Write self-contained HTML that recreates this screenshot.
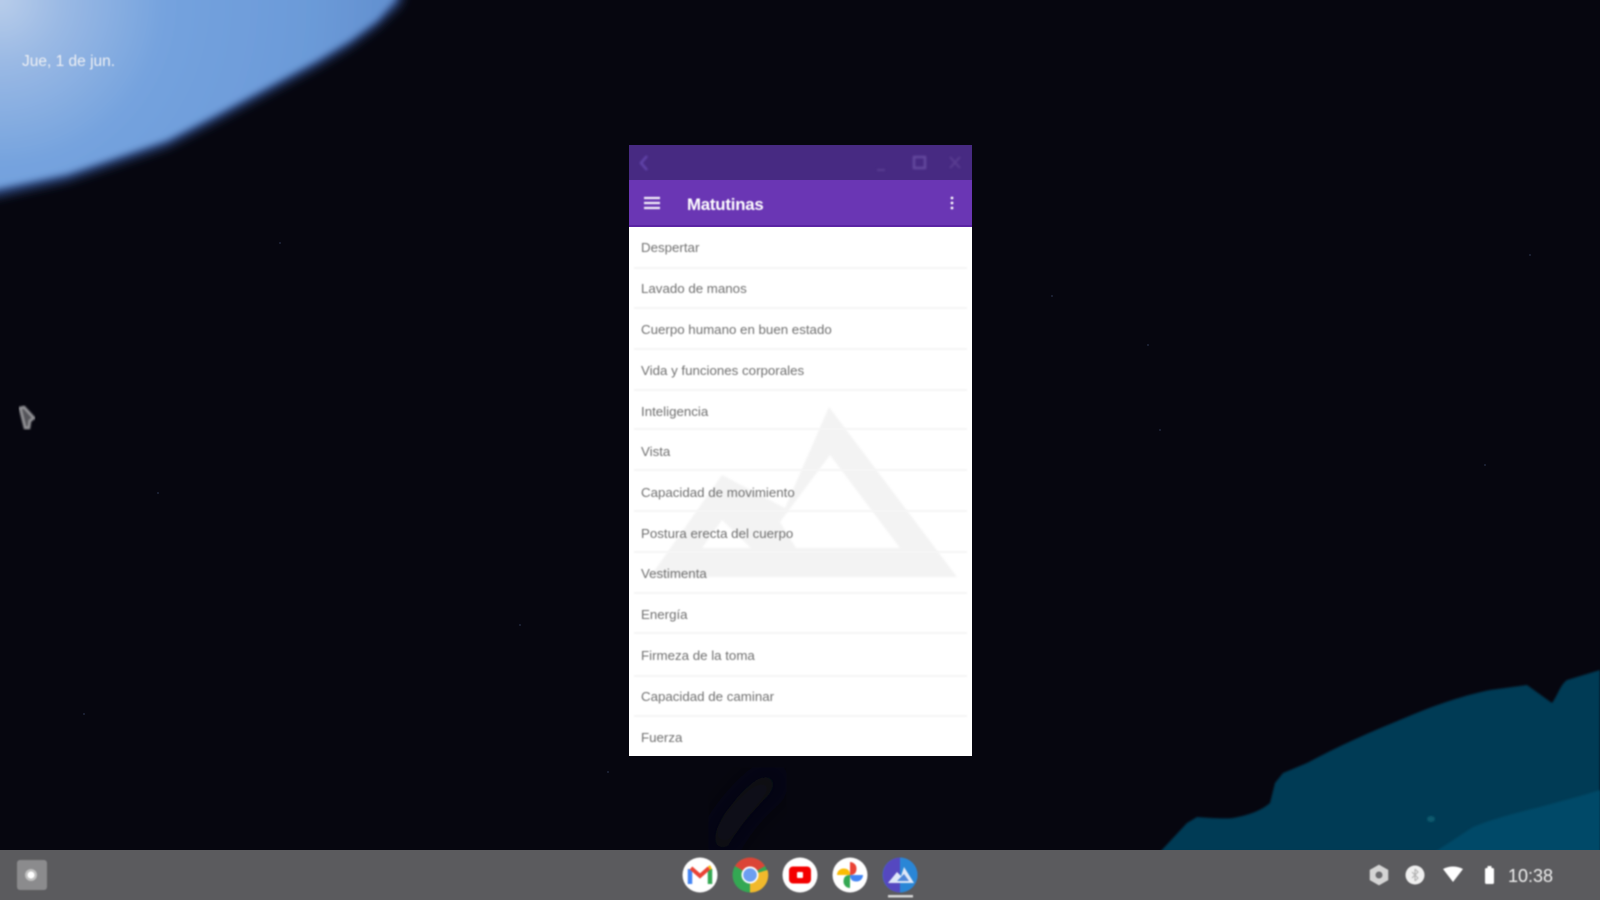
<!DOCTYPE html>
<html lang="es">
<head>
<meta charset="utf-8">
<title>Matutinas</title>
<style>
html,body{margin:0;padding:0;width:1600px;height:900px;overflow:hidden;background:#06060f;font-family:"Liberation Sans",sans-serif}
.abs{position:absolute}
#bg{position:absolute;left:0;top:0;width:1600px;height:900px}
#date{position:absolute;left:22px;top:53px;font-size:15.500px;line-height:18px;color:#eef0f4;filter:blur(.8px);white-space:nowrap}
#win{position:absolute;left:629px;top:145px;width:343px;height:611px;background:#fff;overflow:hidden}
#title{position:absolute;left:0;top:0;width:343px;height:35px;background:#472a82}
#head{position:absolute;left:0;top:35px;width:343px;height:46px;background:#6a36b4}
#head b{position:absolute;left:58px;top:15px;font-size:16.800px;line-height:20px;color:#fff;font-weight:bold;letter-spacing:-.2px;filter:blur(.8px)}
.row{position:absolute;left:12px;font-size:13.300px;line-height:16px;color:#707070;white-space:nowrap;filter:blur(.9px)}
.sep{position:absolute;left:5px;width:333px;height:2px;background:#f6f6f6;filter:blur(.8px)}
#mark{position:absolute;left:0;top:0;width:343px;height:611px;filter:blur(1px)}
#shelf{position:absolute;left:0;top:850px;width:1600px;height:50px;background:#5b5b5e}
#time{position:absolute;left:1508px;top:867px;font-size:18px;line-height:18px;color:#f0f0f0;filter:blur(.8px)}
</style>
</head>
<body>
<svg id="bg" viewBox="0 0 1600 900" xmlns="http://www.w3.org/2000/svg">
<defs>
<radialGradient id="blue" gradientUnits="userSpaceOnUse" cx="0" cy="0" r="420">
<stop offset="0" stop-color="#b8cdea"/>
<stop offset=".15" stop-color="#9ab9e4"/>
<stop offset=".4" stop-color="#74a2de"/>
<stop offset=".75" stop-color="#6b9ad8"/>
<stop offset="1" stop-color="#5f8ccc"/>
</radialGradient>
<filter id="b4"><feGaussianBlur stdDeviation="3.500"/></filter>
<filter id="b6"><feGaussianBlur stdDeviation="5"/></filter>
<filter id="b12"><feGaussianBlur stdDeviation="14"/></filter>
<filter id="b1"><feGaussianBlur stdDeviation="1"/></filter>
</defs>
<rect width="1600" height="900" fill="#06060f"/>
<path d="M-10 198 L0 196 L67 181 L117 164 L167 147 L217 121 L267 94 L317 67 L350 47 L377 27 L400 5 L405 -10 L-10 -10 Z" fill="#2f4a80" filter="url(#b6)"/>
<path d="M-10 190 L0 188 L67 174 L117 157 L167 140 L217 114 L267 87 L317 60 L350 40 L377 20 L395 0 L397 -10 L-10 -10 Z" fill="url(#blue)" filter="url(#b4)"/>
<path d="M1160 852 L1187 823 L1197 817 C1210 818 1225 819 1233 818 C1250 815 1262 810 1270 803 L1275 783 L1283 773 L1307 763 C1340 745 1375 730 1407 717 C1435 705 1465 695 1490 690 L1527 685 L1545 698 L1552 703 C1558 695 1560 685 1567 680 L1600 670 L1600 852 Z" fill="#053a55" filter="url(#b1)"/>
<path d="M1435 852 L1473 827 C1495 818 1520 812 1540 807 C1565 800 1585 795 1600 790 L1600 852 Z" fill="#064a68" filter="url(#b1)"/>
<ellipse cx="1431" cy="819" rx="4" ry="3" fill="#0b5a6e" filter="url(#b1)"/>
<path d="M715 850 C730 820 750 795 780 775" stroke="#080a1e" stroke-width="22" fill="none" filter="url(#b12)"/>
<g fill="#20283c">
<circle cx="158" cy="493" r="1"/><circle cx="84" cy="714" r="1"/><circle cx="608" cy="772" r="1"/><circle cx="1052" cy="296" r="1"/><circle cx="1160" cy="430" r="1"/><circle cx="1530" cy="255" r="1"/><circle cx="1485" cy="465" r="1"/><circle cx="280" cy="243" r="1"/><circle cx="520" cy="625" r="1"/><circle cx="1148" cy="345" r="1"/>
</g>
<path d="M20 408 L24 407 L34 418 L30 421 L29 428 L25 428 Z" fill="#55555a" stroke="#9a9a9e" stroke-width="2.500" filter="url(#b1)"/>
</svg>

<div id="date">Jue, 1 de jun.</div>

<div id="win">
<svg id="mark" viewBox="0 0 343 611" xmlns="http://www.w3.org/2000/svg">
<path fill-rule="evenodd" fill="#f3f3f3" d="M200 262 L328 432 L21 432 L93 330 L156 363 Z M201 310 L151 377 L167 403 L271 403 Z M93 375 L73 403 L122 403 Z"/>
</svg>
<div id="title">
<svg width="343" height="35" viewBox="0 0 343 35" xmlns="http://www.w3.org/2000/svg" style="filter:blur(1px)">
<path d="M18 11 L12 18 L18 25" fill="none" stroke="#6346ac" stroke-width="2.400"/>
<path d="M248 25 H256" stroke="#5a3e92" stroke-width="2"/>
<rect x="285" y="12" width="11" height="11" fill="none" stroke="#654a9f" stroke-width="2.400"/>
<path d="M321 12 L331 23 M331 12 L321 23" stroke="#5a3e92" stroke-width="2"/>
</svg>
</div>
<div id="head">
<svg class="abs" style="left:0;top:0;filter:blur(.7px)" width="343" height="46" viewBox="0 0 343 46" xmlns="http://www.w3.org/2000/svg">
<path d="M15 18 H31 M15 23 H31 M15 28 H31" stroke="#f4f0fa" stroke-width="2.200"/>
<circle cx="323" cy="18" r="1.400" fill="#fff"/><circle cx="323" cy="23" r="1.400" fill="#fff"/><circle cx="323" cy="28" r="1.400" fill="#fff"/>
</svg>
<b>Matutinas</b>
</div>
<div class="abs" style="left:0;top:80px;width:343px;height:2px;background:#5a24a4"></div>

<div class="row" style="top:95px">Despertar</div><div class="sep" style="top:122px"></div>
<div class="row" style="top:136px">Lavado de manos</div><div class="sep" style="top:162px"></div>
<div class="row" style="top:177px">Cuerpo humano en buen estado</div><div class="sep" style="top:203px"></div>
<div class="row" style="top:218px">Vida y funciones corporales</div><div class="sep" style="top:244px"></div>
<div class="row" style="top:259px">Inteligencia</div><div class="sep" style="top:283px"></div>
<div class="row" style="top:299px">Vista</div><div class="sep" style="top:324px"></div>
<div class="row" style="top:340px">Capacidad de movimiento</div><div class="sep" style="top:365px"></div>
<div class="row" style="top:381px">Postura erecta del cuerpo</div><div class="sep" style="top:406px"></div>
<div class="row" style="top:421px">Vestimenta</div><div class="sep" style="top:447px"></div>
<div class="row" style="top:462px">Energía</div><div class="sep" style="top:487px"></div>
<div class="row" style="top:503px">Firmeza de la toma</div><div class="sep" style="top:530px"></div>
<div class="row" style="top:544px">Capacidad de caminar</div><div class="sep" style="top:570px"></div>
<div class="row" style="top:585px">Fuerza</div>
</div>

<div id="shelf"></div>
<svg class="abs" style="left:0;top:850px;filter:blur(.8px)" width="1600" height="50" viewBox="0 850 1600 50" xmlns="http://www.w3.org/2000/svg">
<rect x="17" y="860" width="30" height="30" rx="3" fill="#8b8b8d"/>
<circle cx="31" cy="875" r="6" fill="#c0c0c0"/><circle cx="31" cy="875" r="3.500" fill="#fff"/>

<circle cx="700" cy="875" r="17.500" fill="#fff"/>
<path d="M690 884 V869" stroke="#4285f4" stroke-width="4.500" fill="none"/>
<path d="M710 884 V869" stroke="#34a853" stroke-width="4.500" fill="none"/>
<path d="M691 868 L700 876 L709 868" stroke="#ea4335" stroke-width="4" fill="none"/>
<path d="M709 868 L711 867" stroke="#fbbc05" stroke-width="4" fill="none"/>

<circle cx="750" cy="875" r="17.500" fill="#34a853"/>
<path d="M750 875 L735 866 A17.500 17.500 0 0 1 765 866 Z" fill="#db4437"/>
<path d="M750 875 L767.500 870 A17.500 17.500 0 0 1 750 892.500 Z" fill="#f1b92c"/>
<circle cx="750" cy="875" r="8.500" fill="#fff"/><circle cx="750" cy="875" r="6.800" fill="#6c9ef0"/>

<circle cx="800" cy="875" r="17.500" fill="#fff"/>
<rect x="789" y="866.500" width="22" height="17" rx="4" fill="#f40000"/>
<rect x="797" y="872" width="6" height="6" rx="1" fill="#fff"/>

<circle cx="850" cy="875" r="17.500" fill="#fff"/>
<path d="M850 875 V862 A6.500 6.500 0 0 1 856.500 868.500 Q856.500 875 850 875Z" fill="#ea4335"/>
<path d="M850 875 H863 A6.500 6.500 0 0 1 856.500 881.500 Q850 881.500 850 875Z" fill="#4285f4"/>
<path d="M850 875 V888 A6.500 6.500 0 0 1 843.500 881.500 Q843.500 875 850 875Z" fill="#34a853"/>
<path d="M850 875 H837 A6.500 6.500 0 0 1 843.500 868.500 Q850 868.500 850 875Z" fill="#fbbc05"/>

<circle cx="900" cy="875" r="17.500" fill="#3f6fd0"/>
<path d="M883 875 A17.500 17.500 0 0 1 900 857.500 L900 892.500 A17.500 17.500 0 0 1 883 875Z" fill="#5548c0"/>
<path d="M900 857.500 A17.500 17.500 0 0 1 917.500 875 A17.500 17.500 0 0 1 900 892.500Z" fill="#2a86d6"/>
<path d="M888 883 L897 872 L901 876 L904 867 L914 883 Z" fill="#dfe8f8"/>
<path d="M897 881 L904 874 L909 881 Z" fill="#4f86d8"/>
<rect x="888" y="895" width="25" height="2.500" fill="#d8d8d8"/>

<g fill="#e6e6e6">
<path d="M1379 865.500 L1387.500 870.300 V879.700 L1379 884.500 L1370.500 879.700 V870.300 Z" fill="#d4d4d4" stroke="#d4d4d4" stroke-width="1.500"/>
<circle cx="1379" cy="875" r="3.500" fill="#6b6b6e"/>
<circle cx="1415" cy="875" r="9.500" fill="#efefef"/>
<path d="M1415 869 V881 M1412 872 L1418 878 L1415 881 M1412 878 L1418 872 L1415 869" stroke="#b4b4b4" stroke-width="1.200" fill="none"/>
<path d="M1443 869 Q1453 864 1463 869 L1453 882 Z" fill="#fff"/>
<rect x="1485" y="868" width="9" height="16" rx="1.500" fill="#fff"/>
<rect x="1487.500" y="866" width="4" height="3" fill="#fff"/>
</g>
</svg>
<div id="time">10:38</div>
</body>
</html>
